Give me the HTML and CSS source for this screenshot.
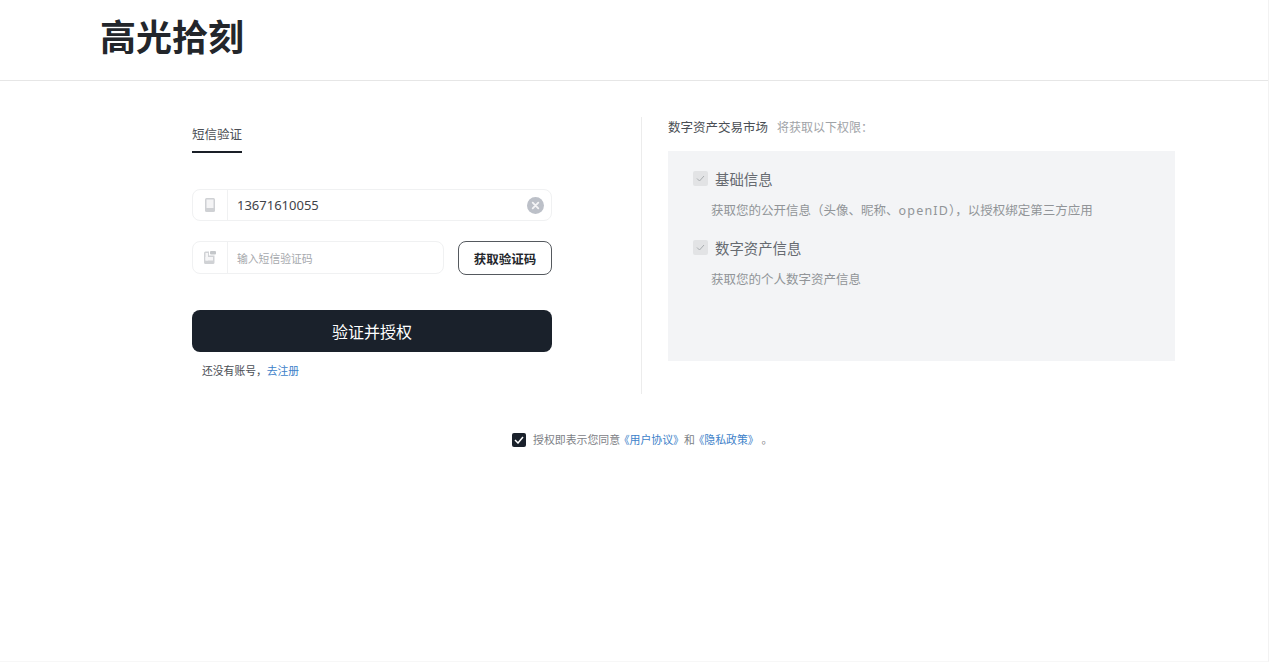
FILE: index.html
```html
<!DOCTYPE html>
<html lang="zh-CN">
<head>
    <meta charset="UTF-8">
    <meta name="viewport" content="width=device-width, initial-scale=1.0">
    <title>高光拾刻</title>
    <link rel="stylesheet" href="styles.css">
</head>
<body>
<div class="page">
    <header class="top">
        <div class="logo">高光拾刻</div>
    </header>

    <main class="auth">
        <section class="left">
            <div class="tab">短信验证</div>

            <div class="field phone-field">
                <span class="field-icon">
                    <svg width="10" height="14" viewBox="0 0 10 14"><rect width="10" height="14" rx="1.500" fill="#cfd1d4"/><rect x="1.500" y="1.500" width="7" height="8.500" fill="#f4f4f5"/></svg>
                </span>
                <span class="phone-value">13671610055</span>
                <span class="clear">
                    <svg width="17" height="17" viewBox="0 0 17 17"><circle cx="8.500" cy="8.500" r="8.500" fill="#bcc0c8"/><path d="M5.700 5.700l5.600 5.600M11.300 5.700l-5.600 5.600" stroke="#f4f4f6" stroke-width="1.800" stroke-linecap="round"/></svg>
                </span>
            </div>

            <div class="code-row">
                <div class="field code-field">
                    <span class="field-icon">
                        <svg width="12" height="13" viewBox="0 0 12 13"><path d="M1.500 0.500h3.500v4h5.500v7a1.500 1.500 0 0 1-1.500 1.500H1.500A1.500 1.500 0 0 1 0 11.500v-9.500a1.500 1.500 0 0 1 1.500-1.500z" fill="#d0d2d5"/><rect x="1.500" y="2" width="2.500" height="7.500" fill="#f6f6f7"/><rect x="1.500" y="6" width="7.500" height="3.500" fill="#f6f6f7"/><rect x="6" y="0" width="6" height="3.500" rx="1" fill="#c4c7ca"/></svg>
                    </span>
                    <span class="placeholder">输入短信验证码</span>
                </div>
                <button class="code-btn">获取验证码</button>
            </div>

            <button class="submit">验证并授权</button>
            <p class="signup">还没有账号&#xFF0C;<a href="#">去注册</a></p>
        </section>

        <section class="right">
            <p class="scope-title"><span class="app-name">数字资产交易市场</span><span class="scope-hint">将获取以下权限&#xFF1A;</span></p>
            <div class="scope-box">
                <div class="scope-head">
                    <span class="mini-check"><svg width="9" height="7" viewBox="0 0 9 7"><path d="M1 3.500l2.500 2.500L8 1" fill="none" stroke="#a9adb0" stroke-width="1"/></svg></span>
                    基础信息
                </div>
                <p class="scope-desc">获取您的公开信息&#xFF08;头像、昵称、<span class="latin">openID</span>&#xFF09;&#xFF0C;以授权绑定第三方应用</p>
                <div class="scope-head">
                    <span class="mini-check"><svg width="9" height="7" viewBox="0 0 9 7"><path d="M1 3.500l2.500 2.500L8 1" fill="none" stroke="#a9adb0" stroke-width="1"/></svg></span>
                    数字资产信息
                </div>
                <p class="scope-desc">获取您的个人数字资产信息</p>
            </div>
        </section>
    </main>

    <div class="agree">
        <span class="agree-check"><svg width="10" height="8" viewBox="0 0 10 8"><path d="M1 4l3 3 5-6" fill="none" stroke="#fff" stroke-width="1.500"/></svg></span>
        <span>授权即表示您同意<a class="doc-link" href="#">&#x300A;用户协议&#x300B;</a>和<a class="doc-link" href="#">&#x300A;隐私政策&#x300B;</a> &#x3002;</span>
    </div>
</div>
</body>
</html>
```

FILE: styles.css
```css
* {
    box-sizing: border-box;
}
html, body {
    margin: 0;
    padding: 0;
    overflow: hidden;
}
body {
    font-family: "Noto Sans", "Noto Sans CJK SC", sans-serif;
    background-color: #fff;
    color: #1a1f27;
}
a {
    color: #3d7fc9;
    text-decoration: none;
}
p {
    margin: 0;
}
.page {
    height: 662px;
    border-right: 1px solid #f2f2f2;
    border-bottom: 1px solid #f7f7f7;
}
.top {
    height: 81px;
    padding: 15px 0 0 100px;
    border-bottom: 1px solid #e6e6e6;
}
.logo {
    font-size: 36px;
    line-height: 46px;
    font-weight: 700;
    color: #23262b;
}
.auth {
    display: flex;
    margin: 36px 0 0 192px;
}
.left {
    width: 450px;
    height: 277px;
    padding-right: 89px;
    border-right: 1px solid #ececec;
}
.tab {
    width: 50px;
    height: 36px;
    padding-top: 9px;
    font-size: 12.5px;
    line-height: 18px;
    color: #4a4e54;
    border-bottom: 2px solid #1a1f27;
}
.field {
    display: flex;
    align-items: center;
    border: 1px solid #f0f1f2;
    border-radius: 8px;
}
.phone-field {
    height: 32px;
    margin-top: 36px;
}
.field-icon {
    display: flex;
    align-items: center;
    justify-content: center;
    flex: none;
    width: 35px;
    height: 100%;
    padding-right: 1px;
    border-right: 1px solid #f0f1f2;
}
.phone-value {
    flex: 1;
    padding-left: 9px;
    font-size: 13px;
    color: #3f4349;
}
.clear {
    display: flex;
    margin-right: 7px;
}
.code-row {
    display: flex;
    justify-content: space-between;
    margin-top: 20px;
}
.code-field {
    width: 252px;
    height: 33px;
}
.placeholder {
    padding-left: 9px;
    font-size: 10.8px;
    color: #a6a9ad;
}
.code-btn {
    width: 94px;
    height: 34px;
    padding: 0;
    font-family: inherit;
    font-size: 12.5px;
    font-weight: 700;
    color: #23262b;
    background-color: #fff;
    border: 1px solid #55595e;
    border-radius: 8px;
}
.submit {
    display: block;
    width: 100%;
    height: 42px;
    margin-top: 35px;
    padding: 0;
    font-family: inherit;
    font-size: 16px;
    color: #fff;
    background-color: #1a212b;
    border: none;
    border-radius: 8px;
}
.signup {
    margin-top: 11px;
    padding-left: 10px;
    font-size: 10.8px;
    line-height: 16px;
    color: #4a4e54;
}
.right {
    width: 507px;
    margin-left: 26px;
}
.scope-title {
    height: 34px;
    line-height: 18px;
}
.app-name {
    font-size: 12.5px;
    color: #4a4e54;
}
.scope-hint {
    margin-left: 9px;
    font-size: 12px;
    color: #a0a3a7;
}
.scope-box {
    height: 210px;
    padding: 17px 25px;
    background-color: #f3f4f6;
}
.scope-head {
    display: flex;
    align-items: center;
    gap: 7px;
    height: 21px;
    font-size: 14.4px;
    color: #666a70;
}
.mini-check {
    display: flex;
    align-items: center;
    justify-content: center;
    width: 15px;
    height: 15px;
    background-color: #e2e3e5;
    border-radius: 2px;
}
.scope-desc {
    margin: 13px 0 17px 18px;
    font-size: 12.5px;
    line-height: 18px;
    color: #919498;
}
.latin {
    letter-spacing: 1.2px;
}
.agree {
    display: flex;
    align-items: center;
    margin: 38px 0 0 512px;
    font-size: 10.9px;
    line-height: 16px;
    color: #7d8186;
}
.doc-link {
    margin-left: -1.500px;
}
.agree-check {
    display: flex;
    align-items: center;
    justify-content: center;
    width: 14px;
    height: 14px;
    margin-right: 7px;
    background-color: #1a212b;
    border-radius: 2px;
}
```
